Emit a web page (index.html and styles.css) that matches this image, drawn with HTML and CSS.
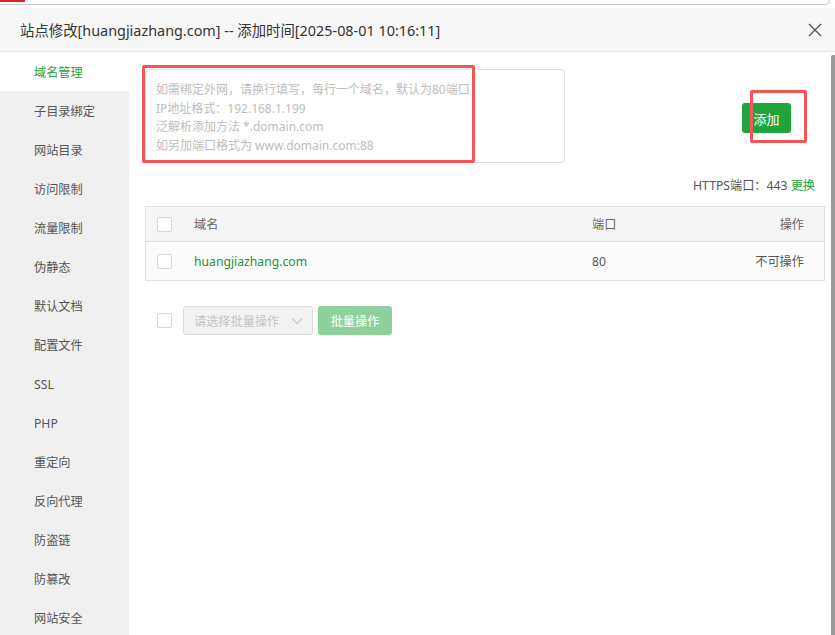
FILE: index.html
```html
<!DOCTYPE html>
<html lang="zh-CN">
<head>
<meta charset="utf-8">
<title>站点修改</title>
<link rel="stylesheet" href="styles.css">
</head>
<body>
<div class="topstrip">
  <div class="redmark"></div>
  <div class="topline"></div>
</div>
<div class="dialog">
  <div class="titlebar">
    <span class="title">站点修改[huangjiazhang.com] -- 添加时间[2025-08-01 10:16:11]</span>
    <span class="close">
      <svg width="14" height="14" viewBox="0 0 14 14"><path d="M1 1L13 13M13 1L1 13" stroke="#555" stroke-width="1.4" fill="none"/></svg>
    </span>
  </div>
  <div class="content">
    <ul class="sidebar">
      <li class="active">域名管理</li>
      <li>子目录绑定</li>
      <li>网站目录</li>
      <li>访问限制</li>
      <li>流量限制</li>
      <li>伪静态</li>
      <li>默认文档</li>
      <li>配置文件</li>
      <li>SSL</li>
      <li>PHP</li>
      <li>重定向</li>
      <li>反向代理</li>
      <li>防盗链</li>
      <li>防篡改</li>
      <li>网站安全</li>
    </ul>
    <div class="main">
      <div class="addrow">
        <div class="textarea">
          <div class="ph">如需绑定外网，请换行填写，每行一个域名，默认为80端口</div>
          <div class="ph">IP地址格式：192.168.1.199</div>
          <div class="ph">泛解析添加方法 *.domain.com</div>
          <div class="ph">如另加端口格式为 www.domain.com:88</div>
          <div class="mark mark-text"></div>
        </div>
        <div class="btnwrap">
          <button class="btn-add">添加</button>
          <div class="mark mark-btn"></div>
        </div>
      </div>
      <div class="https">HTTPS端口：443 <a class="link">更换</a></div>
      <div class="table">
        <div class="tr thead">
          <div class="cell c-check"><span class="checkbox"></span></div>
          <div class="cell c-name">域名</div>
          <div class="cell c-port">端口</div>
          <div class="cell c-op">操作</div>
        </div>
        <div class="tr trow">
          <div class="cell c-check"><span class="checkbox"></span></div>
          <div class="cell c-name green">huangjiazhang.com</div>
          <div class="cell c-port">80</div>
          <div class="cell c-op">不可操作</div>
        </div>
      </div>
      <div class="batch">
        <span class="checkbox"></span>
        <div class="select">
          <span>请选择批量操作</span>
          <svg width="12" height="8" viewBox="0 0 12 8"><path d="M1 1.5L6 6.5L11 1.5" stroke="#c8c8c8" stroke-width="1.2" fill="none"/></svg>
        </div>
        <button class="btn-batch">批量操作</button>
      </div>
    </div>
  </div>
  <div class="scrollbar"></div>
</div>
</body>
</html>
```

FILE: styles.css
```css
* { box-sizing: border-box; }
html, body {
  margin: 0;
  padding: 0;
  background: #fff;
  width: 835px;
  height: 635px;
  overflow: hidden;
  font-family: "Noto Sans", "Noto Sans CJK SC", sans-serif;
  color: #555;
}
.topstrip {
  position: relative;
  height: 8px;
  background: #fff;
}
.redmark {
  position: absolute;
  left: 0;
  top: 0;
  width: 25px;
  height: 2px;
  background: #d9262c;
}
.topline {
  width: 830px;
  height: 5px;
  border-bottom: 1px solid #c8c8c8;
  border-right: 1px solid #c8c8c8;
  border-bottom-right-radius: 6px;
}
.dialog {
  position: relative;
  height: 627px;
  display: flex;
  flex-direction: column;
}
.titlebar {
  height: 44px;
  flex: none;
  background: #f7f7f7;
  border-bottom: 1px solid #e8e8e8;
  display: flex;
  align-items: center;
  justify-content: space-between;
  padding: 0 13px 0 20px;
}
.title {
  font-size: 14.4px;
  color: #333;
}
.close {
  display: flex;
  width: 14px;
  height: 14px;
}
.content {
  flex: 1;
  display: flex;
  min-height: 0;
}
.sidebar {
  list-style: none;
  margin: 0;
  padding: 0;
  width: 129px;
  flex: none;
  background: #f0f0f0;
}
.sidebar li {
  height: 39px;
  line-height: 39px;
  padding-top: 1px;
  padding-left: 34px;
  font-size: 12.2px;
  color: #555;
}
.sidebar li.active {
  background: #fff;
  color: #20a53a;
}
.main {
  flex: 1;
  padding: 17px 10px 0 16px;
}
.addrow {
  display: flex;
  align-items: center;
}
.textarea {
  position: relative;
  width: 420px;
  height: 94px;
  border: 1px solid #e0e0e6;
  border-radius: 4px;
  padding: 11px 10px 0 10px;
}
.ph {
  font-size: 12px;
  line-height: 18.5px;
  color: #bdbdbd;
  white-space: nowrap;
}
.mark {
  position: absolute;
  border: 3px solid #f35656;
  border-radius: 2px;
}
.mark-text {
  left: -4px;
  top: -5px;
  width: 333px;
  height: 98px;
}
.btnwrap {
  position: relative;
  margin-left: auto;
  margin-right: 34px;
  margin-top: 4px;
}
.btn-add {
  display: block;
  width: 49px;
  height: 30px;
  border: none;
  border-radius: 3px;
  background: #20a53a;
  color: #fff;
  font-family: inherit;
  font-size: 13px;
  padding: 0;
}
.mark-btn {
  left: 8px;
  top: -13px;
  width: 57px;
  height: 53px;
}
.https {
  text-align: right;
  font-size: 12.2px;
  color: #555;
  margin-top: 13px;
  padding-right: 10px;
  line-height: 20px;
}
.link { color: #20a53a; }
.table {
  margin-top: 10px;
  border: 1px solid #e0e0e0;
}
.tr {
  display: flex;
  align-items: center;
  font-size: 12.2px;
}
.thead {
  height: 35px;
  background: #f5f5f5;
  border-bottom: 1px solid #e0e0e0;
  color: #666;
}
.trow {
  height: 38px;
  background: #fcfcfc;
  color: #555;
}
.cell { white-space: nowrap; }
.c-check { width: 48px; padding-left: 11px; display: flex; }
.c-name { flex: 1; }
.c-port { width: 100px; }
.c-op { width: 132px; text-align: right; padding-right: 20px; }
.green { color: #2a8d3e; }
.checkbox {
  display: inline-block;
  width: 15px;
  height: 15px;
  border: 1px solid #d6d6dc;
  border-radius: 2px;
  background: #fff;
}
.batch {
  display: flex;
  align-items: center;
  margin-top: 25px;
  padding-left: 12px;
}
.select {
  margin-left: 11px;
  width: 130px;
  height: 29px;
  border: 1px solid #dcdcdc;
  border-radius: 3px;
  background: #f2f2f2;
  display: flex;
  align-items: center;
  justify-content: space-between;
  padding: 0 9px 0 10px;
  font-size: 12.2px;
  color: #c4c4c4;
}
.btn-batch {
  margin-left: 5px;
  width: 74px;
  height: 29px;
  border: none;
  border-radius: 3px;
  background: #8dd19b;
  color: #fff;
  font-family: inherit;
  font-size: 12.2px;
  padding: 0;
}
.scrollbar {
  position: absolute;
  right: 0;
  top: 47px;
  width: 4px;
  bottom: 0;
  background: #9a9a9a;
  border-radius: 2px 0 0 0;
}
```
